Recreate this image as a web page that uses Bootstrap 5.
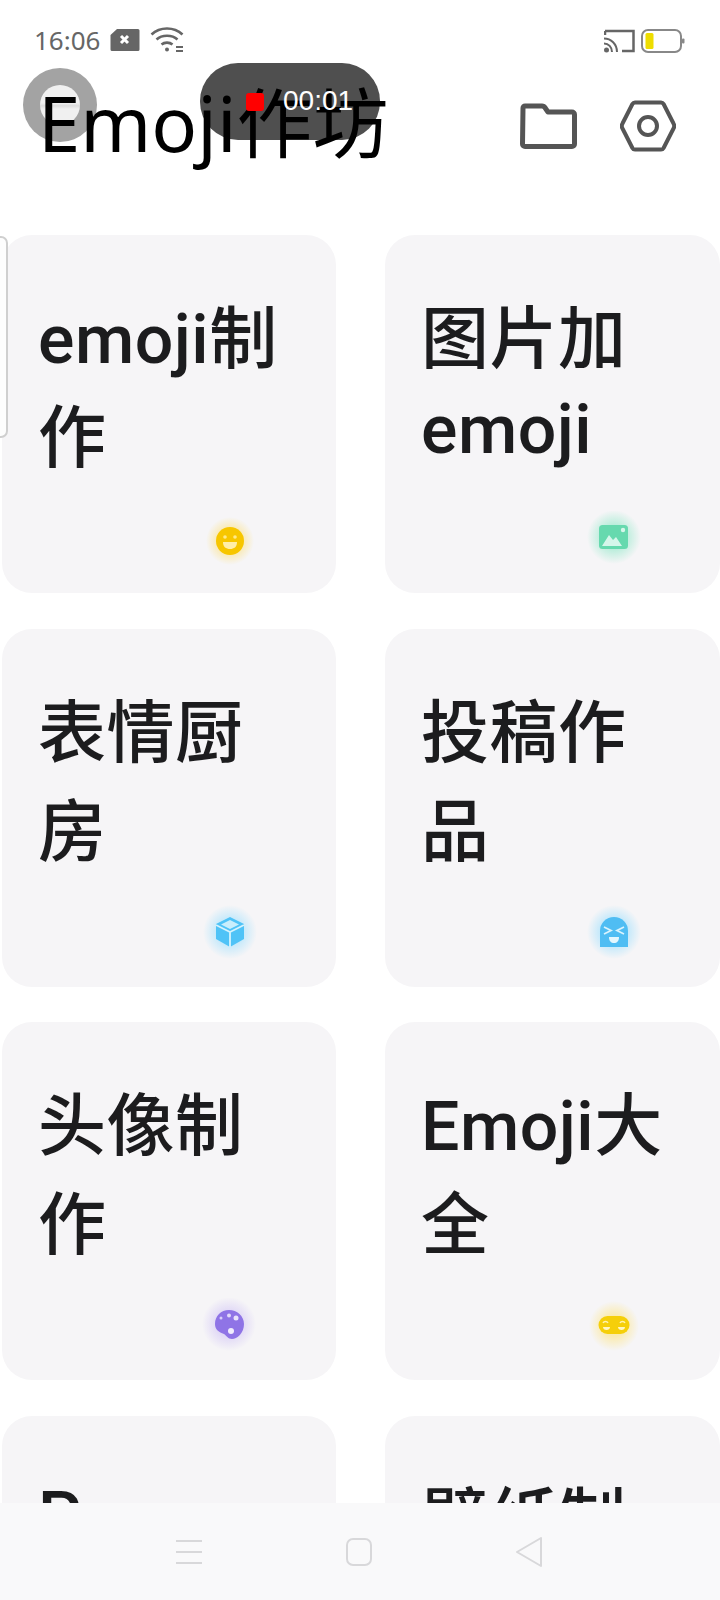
<!DOCTYPE html>
<html lang="zh">
<head>
<meta charset="utf-8">
<title>Emoji作坊</title>
<link rel="stylesheet" href="https://cdn.jsdelivr.net/npm/bootstrap@5.3.0/dist/css/bootstrap.min.css">
<style>
html,body{height:1600px;overflow:hidden;background:#fff}
.screen{width:720px;height:1600px;overflow:hidden;font-family:Roboto,"Noto Sans CJK SC",sans-serif}
.page{position:relative;height:1600px}
.stat{height:80px;padding:22px 35px 0 34px;color:#666}
.stat-left{gap:10px}
.clock{font-size:26px;line-height:36px;font-family:"Noto Sans",Roboto,sans-serif}
.head{height:155px;padding:0 44px 0 38px}
.app-title{font-family:"Noto Sans","Noto Sans CJK SC",sans-serif;font-size:76px;font-weight:400;color:#000;margin:0;line-height:86px;position:relative;z-index:2}
.head-icons{gap:43px;margin-top:20px}
.tiles{display:grid;grid-template-columns:334px 335px;column-gap:49px;row-gap:35.5px;padding-left:2px}
.tile{height:358px;background:#f6f5f7;border-radius:30px;padding:49px 26px 22px 36px;filter:blur(.5px)}
.tile-name{font-size:68px;font-weight:500;color:#1c1c1e;margin:0;letter-spacing:.5px;line-height:normal}
.low-word{display:inline-block;padding-top:7px}
.first-low{padding-top:12px}
.tile-ico{width:60px;height:60px;margin-right:50px;flex:none}
.pill{position:absolute;z-index:1;left:200px;top:63px;width:180px;height:77px;border-radius:38px;background:#4f4f4f}
.pill-txt{position:absolute;z-index:3;left:246px;top:86px;color:#fff;font-size:28px;gap:19px;line-height:30px;font-family:"Liberation Sans",sans-serif}
.pill-txt i{display:block;width:18px;height:18px;background:#f00;border-radius:3px;margin-top:7px}
.ball{position:absolute;z-index:1;left:23px;top:68px;width:74px;height:74px;border-radius:50%;background:#a3a3a3;display:flex;align-items:center;justify-content:center}
.ball i{display:block;width:40px;height:40px;border-radius:50%;background:linear-gradient(#f0f0f0 45%,#dcdcdc 52%,#f0f0f0 60%)}
.edge{position:absolute;left:-6px;top:236px;width:14px;height:202px;border:2px solid #cfcfcf;border-radius:7px;background:#fdfdfd}
.softkeys{position:absolute;z-index:4;left:0;top:1503px;width:720px;height:97px;background:#f9f9fa;padding:0 177px 0 175px}
</style>
</head>
<body>
<div class="screen">
<div class="page">
  <div class="stat d-flex align-items-start justify-content-between">
    <div class="stat-left d-flex align-items-center">
      <span class="clock">16:06</span>
      <svg width="30" height="24" viewBox="0 0 30 24"><path d="M7 1H28a1.500 1.500 0 0 1 1.500 1.500V21.500A1.500 1.500 0 0 1 28 23H2a1.500 1.500 0 0 1-1.500-1.500V7Z" fill="#666"/><path d="M11 8l7 7M18 8l-7 7" stroke="#fff" stroke-width="3"/></svg>
      <svg width="34" height="26" viewBox="0 0 34 26" fill="none" stroke="#666" stroke-width="2.600"><path d="M1.500 7.500C10 -.5 24 -.5 32.500 7.500"/><path d="M6.500 12.500C12 7.500 22 7.500 27.500 12.500"/><path d="M11.500 17.500C14.500 15 19.500 15 22.500 17.500"/><circle cx="17" cy="22.500" r="2" fill="#666" stroke="none"/><path d="M26 20h7M26 24h7" stroke-width="2"/></svg>
    </div>
    <div class="d-flex align-items-center" style="gap:6px;padding-top:6px">
      <svg width="31" height="24" viewBox="0 0 31 24" fill="none" stroke="#666" stroke-width="2.500"><path d="M1 2h28.500v20H18"/><path d="M1 2v4"/><path d="M0 9.500C7 9.500 13 15 13 23M0 14.500C4.500 14.500 8 18 8 23" stroke-width="2"/><circle cx="2.500" cy="21" r="2.500" fill="#666" stroke="none"/></svg>
      <svg width="44" height="26" viewBox="0 0 44 26"><rect x="1" y="2" width="39" height="22" rx="6" fill="#fff" stroke="#888" stroke-width="2"/><rect x="4.500" y="5" width="8" height="16" rx="1.500" fill="#eedd00"/><rect x="41" y="10.500" width="2.500" height="5" rx="1" fill="#888"/></svg>
    </div>
  </div>

  <div class="head d-flex align-items-start justify-content-between">
    <h1 class="app-title">Emoji作坊</h1>
    <div class="head-icons d-flex align-items-center">
      <svg width="57" height="46" viewBox="0 0 57 46" fill="none" stroke="#555" stroke-width="5" stroke-linejoin="round"><path d="M3 5a2 2 0 0 1 2-2H22c1.500 0 2.500.8 3.200 2L28 9H52a2.500 2.500 0 0 1 2.500 2.500V41a2.500 2.500 0 0 1-2.500 2.500H5A2.500 2.500 0 0 1 2.500 41Z"/></svg>
      <svg width="56" height="52" viewBox="0 0 56 52" fill="none" stroke="#555" stroke-width="4"><path d="M15 2.500H41a3 3 0 0 1 2.600 1.500L53.500 23.500a5 5 0 0 1 0 5L43.600 48a3 3 0 0 1-2.600 1.500H15a3 3 0 0 1-2.600-1.500L2.500 28.500a5 5 0 0 1 0-5L12.400 4A3 3 0 0 1 15 2.500Z"/><circle cx="28" cy="26" r="9" stroke-width="4"/></svg>
    </div>
  </div>

  <div class="tiles">
    <div class="tile d-flex flex-column justify-content-between">
      <h2 class="tile-name">emoji制作</h2>
      <svg class="tile-ico align-self-end" viewBox="0 0 60 60"><defs><radialGradient id="g1"><stop offset=".4" stop-color="#ffd84d" stop-opacity=".5"/><stop offset="1" stop-color="#ffd84d" stop-opacity="0"/></radialGradient></defs><circle cx="30" cy="30" r="24" fill="url(#g1)"/><circle cx="30" cy="30" r="14" fill="#f7c600"/><circle cx="25" cy="26" r="1.800" fill="#ffe98a"/><circle cx="35" cy="26" r="1.800" fill="#ffe98a"/><path d="M23 31h14c0 5-3 7-7 7s-7-2-7-7Z" fill="#ffeeaa"/></svg>
    </div>
    <div class="tile d-flex flex-column justify-content-between">
      <h2 class="tile-name">图片加<span class="low-word">emoji</span></h2>
      <svg class="tile-ico align-self-end" viewBox="0 0 60 60"><defs><radialGradient id="g2"><stop offset=".4" stop-color="#7fe6c0" stop-opacity=".55"/><stop offset="1" stop-color="#7fe6c0" stop-opacity="0"/></radialGradient></defs><circle cx="30" cy="26" r="27" fill="url(#g2)"/><rect x="15" y="14" width="29" height="24" rx="3.500" fill="#66d9ae"/><path d="M18 35l7-11 4 5 3-3 6 9Z" fill="#d5f6ea"/><circle cx="39" cy="19" r="2.200" fill="#d5f6ea"/></svg>
    </div>
    <div class="tile d-flex flex-column justify-content-between">
      <h2 class="tile-name">表情厨房</h2>
      <svg class="tile-ico align-self-end" viewBox="0 0 60 60"><defs><radialGradient id="g3"><stop offset=".4" stop-color="#8fdcff" stop-opacity=".55"/><stop offset="1" stop-color="#8fdcff" stop-opacity="0"/></radialGradient></defs><circle cx="30" cy="27" r="27" fill="url(#g3)"/><path d="M30 12l14 7v15l-14 8-14-8V19Z" fill="#4fc3f7"/><path d="M30 15l9 4.500-9 4.500-9-4.500Z" fill="#c9eefc"/><path d="M16 20l14 7 14-7M30 27v15" fill="none" stroke="#d5f3fd" stroke-width="1.800"/></svg>
    </div>
    <div class="tile d-flex flex-column justify-content-between">
      <h2 class="tile-name">投稿作品</h2>
      <svg class="tile-ico align-self-end" viewBox="0 0 60 60"><defs><radialGradient id="g4"><stop offset=".4" stop-color="#8fdcff" stop-opacity=".6"/><stop offset="1" stop-color="#8fdcff" stop-opacity="0"/></radialGradient></defs><circle cx="30" cy="27" r="27" fill="url(#g4)"/><path d="M16 42V26a14 14 0 0 1 28 0V42Z" fill="#4fbdf3"/><path d="M20 22l7 3.500-7 3.500M40 22l-7 3.500 7 3.500" fill="none" stroke="#d9f3fd" stroke-width="1.800"/><path d="M25 32h10c0 4-2 6-5 6s-5-2-5-6Z" fill="#e4f7fe"/></svg>
    </div>
    <div class="tile d-flex flex-column justify-content-between">
      <h2 class="tile-name">头像制作</h2>
      <svg class="tile-ico align-self-end" viewBox="0 0 60 60"><defs><radialGradient id="g5"><stop offset=".4" stop-color="#c5b5f5" stop-opacity=".5"/><stop offset="1" stop-color="#c5b5f5" stop-opacity="0"/></radialGradient></defs><circle cx="29" cy="26" r="27" fill="url(#g5)"/><path d="M29 12c8 0 15 6 15 14 0 9-7 15-12 15-4 0-5-3-8-5-5-2-9-4-9-10 0-8 6-14 14-14Z" fill="#8f74e6"/><circle cx="21" cy="20" r="1.500" fill="#d9cff8"/><circle cx="29" cy="17.500" r="2" fill="#e3dbfa"/><circle cx="36" cy="20" r="2.500" fill="#e9e3fb"/><circle cx="31" cy="33" r="3" fill="#f1edfd"/></svg>
    </div>
    <div class="tile d-flex flex-column justify-content-between">
      <h2 class="tile-name">Emoji大全</h2>
      <svg class="tile-ico align-self-end" viewBox="0 0 60 60"><defs><radialGradient id="g6"><stop offset=".4" stop-color="#ffe066" stop-opacity=".5"/><stop offset="1" stop-color="#ffe066" stop-opacity="0"/></radialGradient></defs><circle cx="30" cy="28" r="25" fill="url(#g6)"/><rect x="14.500" y="18" width="31" height="18" rx="9" fill="#f5cf0a"/><path d="M19 25c1-2 4-2 5 0M36 25c1-2 4-2 5 0" fill="none" stroke="#fff3b0" stroke-width="1.500"/><path d="M19 29h7c0 2-1.500 3-3.500 3s-3.500-1-3.500-3ZM34 29h7c0 2-1.500 3-3.500 3s-3.500-1-3.500-3Z" fill="#fff6c4"/></svg>
    </div>
    <div class="tile"><h2 class="tile-name"><span class="low-word first-low">Pro</span></h2></div>
    <div class="tile"><h2 class="tile-name">壁纸制作</h2></div>
  </div>

  <div class="edge"></div>
  <div class="ball"><i></i></div>
  <div class="pill"></div>
  <div class="pill-txt d-flex"><i></i><span>00:01</span></div>

  <div class="softkeys d-flex align-items-center justify-content-between">
    <svg width="28" height="28" viewBox="0 0 28 28" fill="none" stroke="#d8d8da" stroke-width="2"><path d="M1 3h26M1 14h26M1 25h26"/></svg>
    <svg width="28" height="30" viewBox="0 0 28 30" fill="none" stroke="#d8d8da" stroke-width="2"><rect x="2" y="2" width="24" height="26" rx="6"/></svg>
    <svg width="28" height="30" viewBox="0 0 28 30" fill="none" stroke="#d8d8da" stroke-width="2" stroke-linejoin="round"><path d="M26 1V29L2 15Z"/></svg>
  </div>
</div>
</div>
<script src="https://cdn.jsdelivr.net/npm/bootstrap@5.3.0/dist/js/bootstrap.bundle.min.js"></script>
</body>
</html>
